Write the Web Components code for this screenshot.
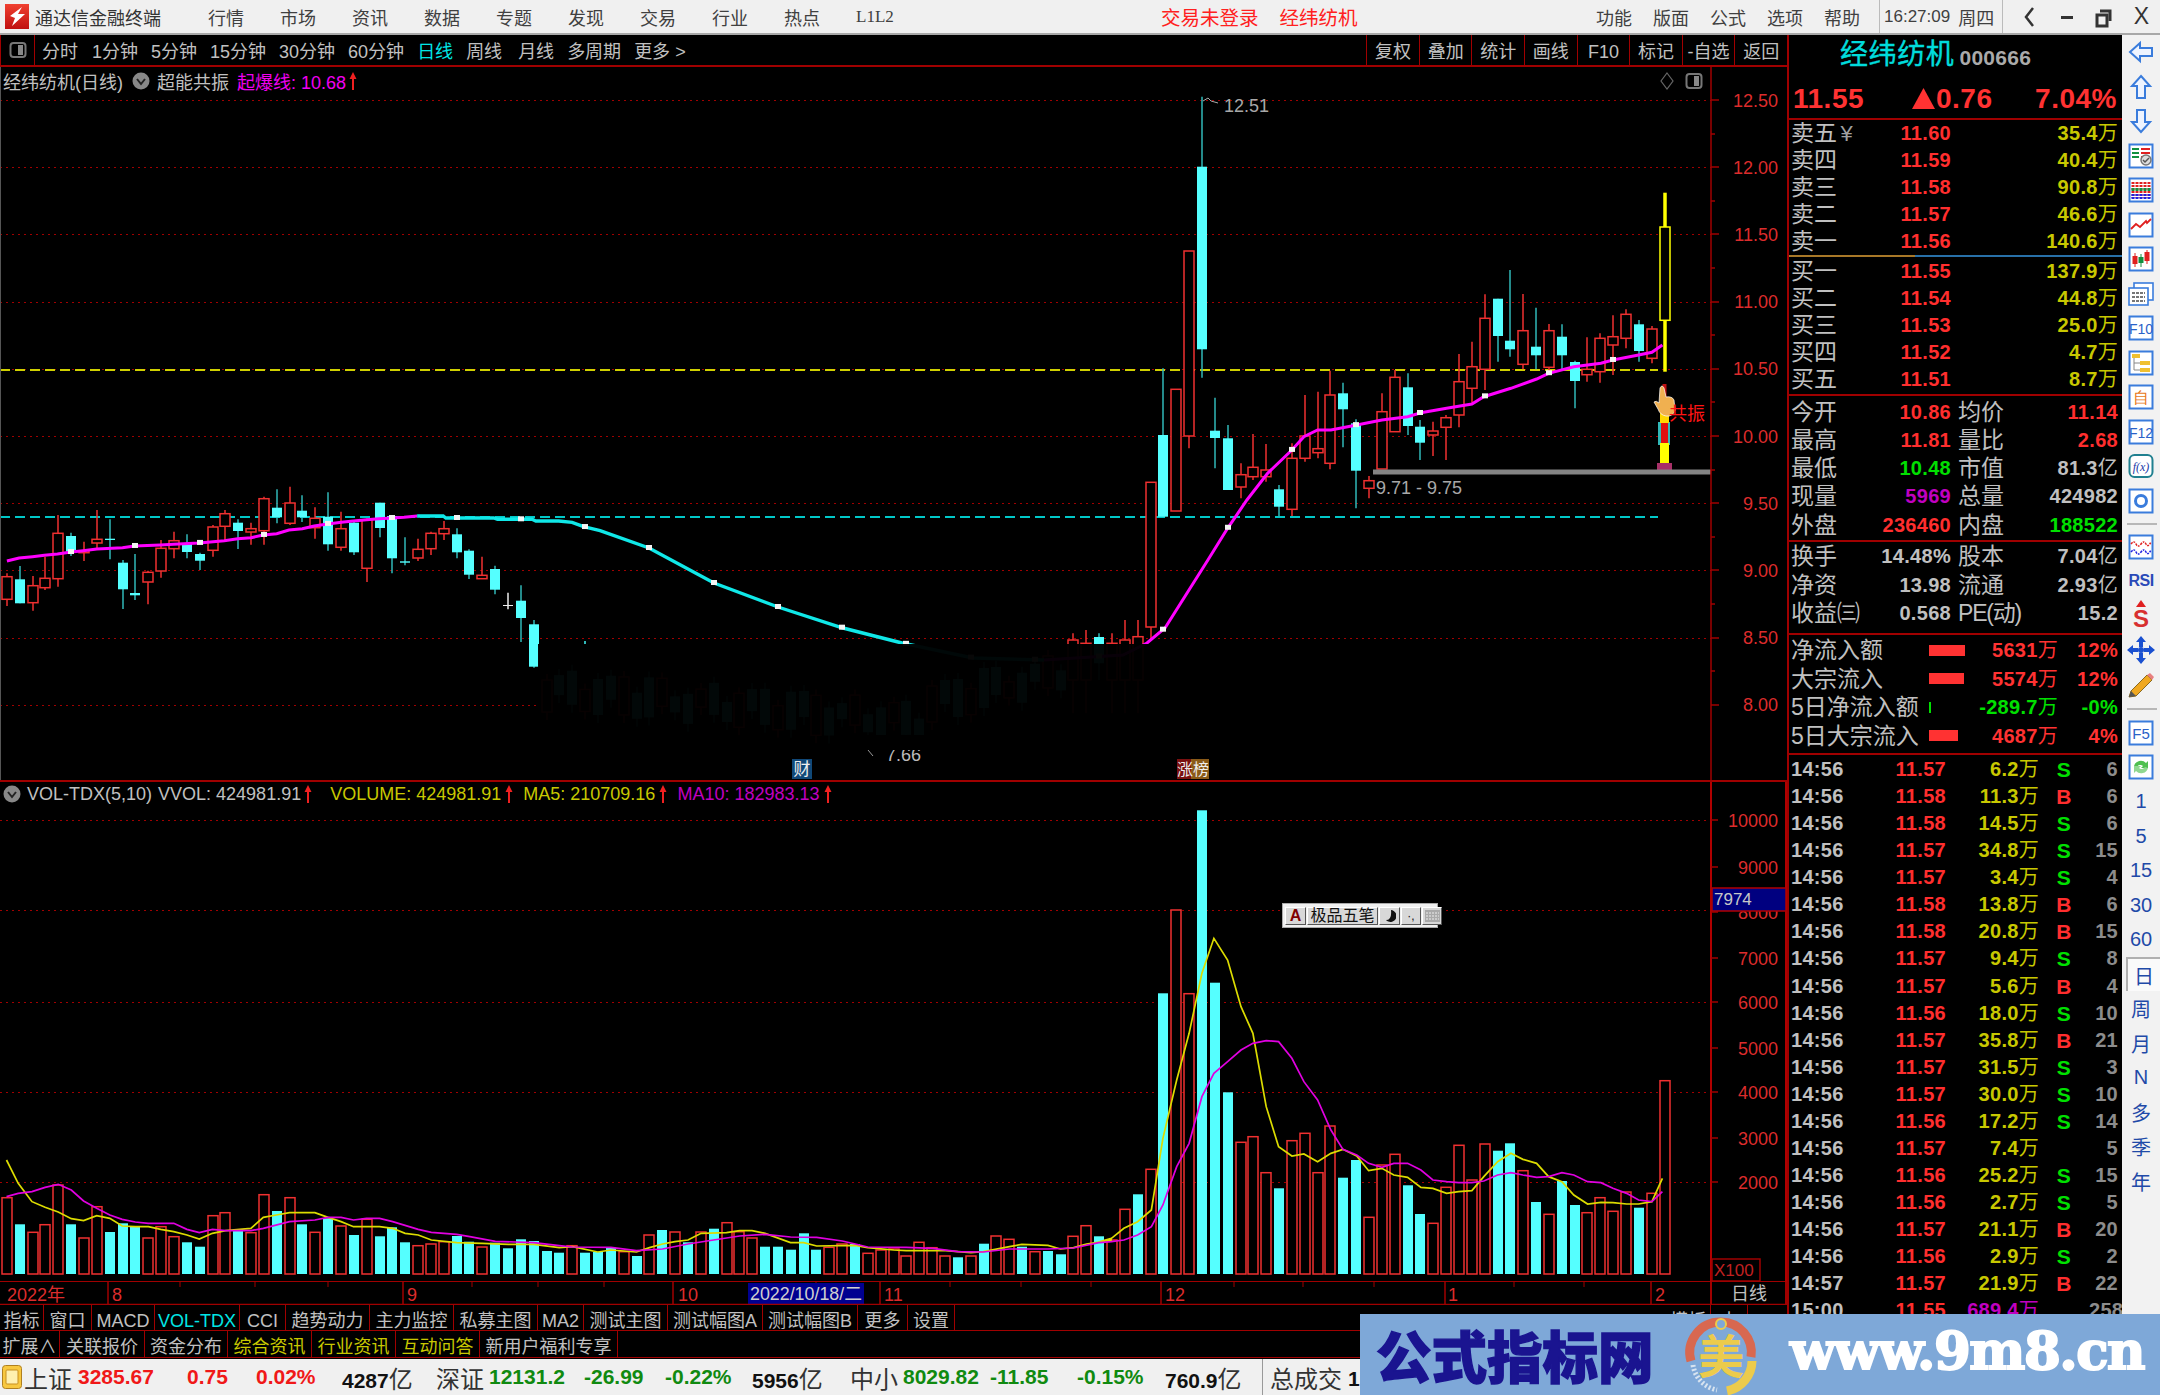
<!DOCTYPE html>
<html lang="zh"><head><meta charset="utf-8"><title>通达信金融终端</title>
<style>
html,body{margin:0;padding:0;background:#000;overflow:hidden}
body{font-family:"Liberation Sans","Noto Sans CJK SC",sans-serif;width:2160px;height:1395px}
</style></head>
<body>
<tdx-app>
  <tdx-titlebar slot="title"></tdx-titlebar>
  <tdx-toolbar slot="toolbar"></tdx-toolbar>
  <tdx-kline slot="kline"></tdx-kline>
  <tdx-volume slot="volume"></tdx-volume>
  <tdx-dateaxis slot="date"></tdx-dateaxis>
  <tdx-tabbar slot="tabs1" style="height:26px">
    <tdx-tab w="44">指标</tdx-tab><tdx-tab w="48">窗口</tdx-tab><tdx-tab w="63">MACD</tdx-tab><tdx-tab w="85" c="#00e6e6">VOL-TDX</tdx-tab><tdx-tab w="46">CCI</tdx-tab><tdx-tab w="84">趋势动力</tdx-tab><tdx-tab w="84">主力监控</tdx-tab><tdx-tab w="84">私募主图</tdx-tab><tdx-tab w="46">MA2</tdx-tab><tdx-tab w="84">测试主图</tdx-tab><tdx-tab w="95">测试幅图A</tdx-tab><tdx-tab w="95">测试幅图B</tdx-tab><tdx-tab w="50">更多</tdx-tab><tdx-tab w="47">设置</tdx-tab>
    <tdx-tab w="45" style="margin-left:711px">模板</tdx-tab><tdx-tab w="37">十</tdx-tab>
  </tdx-tabbar>
  <tdx-tabbar slot="tabs2" style="height:27px">
    <tdx-tab w="60">扩展∧</tdx-tab><tdx-tab w="85">关联报价</tdx-tab><tdx-tab w="83">资金分布</tdx-tab><tdx-tab w="84" c="#c8c800">综合资讯</tdx-tab><tdx-tab w="84" c="#c8c800">行业资讯</tdx-tab><tdx-tab w="84" c="#c8c800">互动问答</tdx-tab><tdx-tab w="138">新用户福利专享</tdx-tab>
  </tdx-tabbar>
  <tdx-quote slot="quote"></tdx-quote>
  <tdx-sidebar slot="side"></tdx-sidebar>
  <tdx-statusbar slot="status"></tdx-statusbar>
  <tdx-watermark slot="mark"></tdx-watermark>
</tdx-app>
<script>
const def=(name,css,html)=>customElements.define(name,class extends HTMLElement{
  connectedCallback(){ if(this.shadowRoot) return;
    const r=this.attachShadow({mode:'open'});
    r.innerHTML=`<style>${css}</style>${typeof html==='function'?html(this):html}`; }
});
const RED='#f03030',CY='#55ffff',TEAL='#30b8b8',YEL='#c8c800',GRN='#00e000',MAG='#c000c0',GRY='#c0c0c0',LINE='#a00000';

/* ---------- app frame ---------- */
def('tdx-app',`
:host{display:grid;position:relative;width:2160px;height:1395px;grid-template-rows:35px 1324px 36px;grid-template-columns:1787px 335px 38px;background:#000;overflow:hidden}
.t{grid-column:1/4}.l{display:flex;flex-direction:column;background:#000}.s{grid-column:1/4}
.m{position:absolute;right:0;bottom:0}`,
`<div class="t"><slot name="title"></slot></div>
 <div class="l"><slot name="toolbar"></slot><slot name="kline"></slot><slot name="volume"></slot><slot name="date"></slot><slot name="tabs1"></slot><slot name="tabs2"></slot></div>
 <slot name="quote"></slot><slot name="side"></slot>
 <div class="s"><slot name="status"></slot></div>
 <div class="m"><slot name="mark"></slot></div>`);

/* ---------- title bar ---------- */
def('tdx-titlebar',`
:host{display:flex;align-items:center;height:33px;background:#f0f0f0;border-bottom:2px solid #a8a8a8;font-size:18px;color:#404040;padding-left:5px}
svg{flex:none}.app{margin-left:6px;width:173px;color:#333}.menu{display:flex;gap:36px;align-items:center}.menu span{flex:none}
.warn{position:absolute;left:1161px;color:#ff2020;font-size:19.5px;display:flex;gap:21px}
.r{position:absolute;left:1596px;display:flex;gap:21px}
.clock{position:absolute;left:1879px;height:33px;width:124px;display:flex;align-items:center;border-left:1px solid #bbb;border-right:1px solid #bbb;padding-left:4px;box-sizing:border-box;font-size:17px;gap:8px}
.clock b{font-weight:400;font-size:18px}
.w{position:absolute;left:2012px;display:flex;align-items:center;gap:0}
.w>*{width:37px;display:flex;justify-content:center;align-items:center;height:33px}
.w b{font-size:23px;font-weight:400;color:#333}`,
`<svg width="24" height="25" viewBox="0 0 24 25"><defs><linearGradient id="g" x1="0" y1="0" x2="0" y2="1"><stop offset="0" stop-color="#f04030"/><stop offset="1" stop-color="#c01010"/></linearGradient></defs><rect width="24" height="25" fill="url(#g)"/><path d="M17 3 L5 12 L10 14 L7 22 L20 10 L13 10 Z" fill="#fff"/></svg>
<span class="app">通达信金融终端</span>
<div class="menu"><span>行情</span><span>市场</span><span>资讯</span><span>数据</span><span>专题</span><span>发现</span><span>交易</span><span>行业</span><span>热点</span><span style="font-size:17px;font-family:'Liberation Serif';line-height:18px">L1L2</span></div>
<div class="warn"><span>交易未登录</span><span>经纬纺机</span></div>
<div class="r"><span>功能</span><span>版面</span><span>公式</span><span>选项</span><span>帮助</span></div>
<div class="clock"><span>16:27:09</span><b>周四</b></div>
<div class="w"><svg width="37" height="33" viewBox="0 0 37 33"><path d="M21 8 L14 17 L21 26" fill="none" stroke="#333" stroke-width="2.5"/></svg>
<svg width="37" height="33" viewBox="0 0 37 33"><rect x="12" y="16" width="12" height="3" fill="#333"/></svg>
<svg width="37" height="33" viewBox="0 0 37 33"><path d="M14 11h10v10" fill="none" stroke="#333" stroke-width="3"/><rect x="11" y="15" width="10" height="11" fill="none" stroke="#333" stroke-width="3"/></svg>
<b>X</b></div>`);

/* ---------- toolbar ---------- */
def('tdx-toolbar',`
:host{display:flex;height:30px;flex:none;background:#000;border-bottom:2px solid ${LINE};color:${GRY};font-size:18px;line-height:35px;white-space:nowrap}
.ic{width:35px;border-left:1px solid ${LINE};border-right:1px solid ${LINE};box-sizing:border-box;display:flex;align-items:center;justify-content:center}
.a{display:flex;gap:13px;margin-left:7px}.a span{flex:none}.sel{color:#00e6e6}
.b{display:flex;margin-left:auto}.b span{width:52.6px;text-align:center;border-left:1px solid ${LINE};box-sizing:border-box}`,
`<div class="ic"><svg width="18" height="18" viewBox="0 0 18 18"><rect x="1.5" y="2" width="15" height="14" rx="3" fill="none" stroke="#777" stroke-width="2"/><rect x="9" y="4" width="5" height="10" fill="#888"/></svg></div>
<div class="a"><span style="margin-right:1px">分时</span><span>1分钟</span><span>5分钟</span><span>15分钟</span><span>30分钟</span><span>60分钟</span><span class="sel">日线</span><span>周线</span><span style="margin-left:3px">月线</span><span>多周期</span><span>更多 &gt;</span></div>
<div class="b"><span>复权</span><span>叠加</span><span>统计</span><span>画线</span><span>F10</span><span>标记</span><span>-自选</span><span>返回</span></div>`);

/* ---------- chart data: price candles ---------- */
const L=[['r',400,410,478,498],['c',378,418,490,490],['r',408,437,488,512],['r',350,415,443,450],['r',225,280,416,440],['c',278,288,335,348],['r',305,332,338,363],['r',210,298,309,330],['c',238,296,300,358],['c',360,368,448,507],['c',342,459,466,480],['r',392,397,426,493],['r',300,325,393,413],['r',275,302,326,355],['c',283,310,336,355],['c',338,342,362,390],['r',255,261,331,350],['r',210,221,259,300],['c',238,248,273,327],['r',248,266,276,314],['r',170,176,272,314],['c',148,203,232,250],['r',140,189,250,255],['c',166,212,232,246],['r',202,235,263,296],['c',157,230,313,332],['r',215,266,322,332],['c',240,248,337,345],['r',235,240,385,426],['c',188,188,264,292],['c',225,228,355,400],['c',292,364,368,376],['r',296,328,354,363],['r',275,280,326,345],['r',243,266,281,300],['c',265,283,337,355],['c',328,332,404,417],['r',350,406,416,416],['c',377,387,449,463],['w',458,495,498,508],['c',436,482,534,606],['c',540,553,680,683]];
const R=[['r',1660,1680,1800,1900],['r',1650,1690,1800,1900],['c',1660,1671,1750,1800],['r',1660,1690,1800,1900],['r',1620,1680,1800,1900],['r',1620,1670,1800,1900],
['r',1207,1207,1641,1680],['c',865,1065,1310,1310],['r',928,928,1293,1293],['r',513,513,1068,1105],['c',50,260,808,893],['c',953,1052,1074,1165],['c',1035,1075,1230,1230],['r',1150,1184,1221,1255],['r',1062,1162,1190,1200],['r',1092,1170,1190,1205],['c',1215,1228,1280,1310],['r',1090,1135,1288,1308],['r',945,1068,1135,1145],['r',935,1106,1118,1135],['r',872,945,1150,1168],['c',908,940,988,1102],['c',1018,1030,1172,1285],['r',1188,1202,1225,1255],['r',940,995,1167,1167],['r',870,892,1055,1055],['c',880,922,1038,1065],['c',1020,1040,1088,1140],['r',1025,1053,1065,1128],['r',1005,1013,1042,1140],['r',822,905,1005,1042],['r',785,860,925,968],['r',643,715,868,930],['c',656,656,768,845],['c',570,782,808,830],['r',642,752,853,868],['c',683,800,826,868],['r',732,752,862,880],['c',733,770,826,870],['c',842,846,903,985],['r',772,868,884,905],['r',760,775,875,908],['r',706,770,795,885],['r',688,703,775,805],['c',720,733,813,845],['r',738,747,835,850],['y',338,441,721,875]];
const X=i=>Math.round(6.9+12.85*i);
function candle(i,c,hi,t,b,lo){
  const x=X(i),col={r:RED,c:CY,w:'#eee',y:'#ffff00'}[c],wick=c==='c'?TEAL:col,ww=c==='y'?3.5:1.5;
  let s=`<path d="M${x} ${hi}V${lo}" stroke="${wick}" stroke-width="${ww}"/>`;
  const h=Math.max(b-t,1);
  if(c==='c'||c==='w') s+=`<rect x="${x-5}" y="${t}" width="10" height="${h}" fill="${col}"/>`;
  else s+=`<rect x="${x-5}" y="${t}" width="10" height="${h}" fill="#000" stroke="${col}" stroke-width="1.5"/>`;
  return s;
}
const zL=v=>+(440+v/3).toFixed(1), zR=v=>+(80+v/3).toFixed(1);
const ptsL=[[18,363],[50,354],[85,350],[116,346],[150,342],[186,336],[217,332],[253,327],[320,323],[351,318],[420,315],[453,313],[520,309],[586,302],[621,296],[656,293],[688,285],[723,281],[755,270],[790,266],[821,258],[856,252],[892,247],[923,243],[958,239],[990,236],[1025,234],[1056,232],[1090,228]].map(p=>[p[0]/2.613,zL(p[1])]);
const ptsC=[[1090,228],[1158,228],[1165,234],[1290,234],[1300,238],[1390,238],[1400,243],[1460,243],[1495,247],[1525,260],[1568,272]].map(p=>[p[0]/2.613,zL(p[1])]).concat([[649,548],[714,583],[778,607],[843,628],[902,643],[973,658],[1044,660]]);
const ptsM2=[[1044,660],[1123,655],[1147,643],[1165,628]].concat([[235,1440],[278,1345],[320,1260],[365,1180],[418,1110],[444,1070],[474,1050],[503,1050],[559,1035],[614,1020],[670,1010],[699,998],[755,985],[810,972],[836,950],[895,925],[951,897],[977,880],[1032,860],[1091,850],[1117,840],[1173,825],[1202,817],[1225,795]].map(p=>[1100+p[0]/2.178,zR(p[1])]));
const poly=p=>p.map(q=>q[0].toFixed(1)+','+q[1]).join(' ');
function at(x){const a=ptsL.concat(ptsC.slice(1),ptsM2.slice(1));for(let k=1;k<a.length;k++){if(x<=a[k][0])return a[k-1][1]+(a[k][1]-a[k-1][1])*(x-a[k-1][0])/(a[k][0]-a[k-1][0]);}return a[a.length-1][1]}

function klineSvg(){
  const Y=p=>100+(12.5-p)*134.4; let s='';
  const lv=['12.50','12.00','11.50','11.00','10.50','10.00','9.50','9.00','8.50','8.00'];
  lv.forEach(v=>{const y=Math.round(Y(+v));const e=v==='8.00'?538:1711;s+=`<path d="M0 ${y}.5H${e}" stroke="${LINE}" stroke-dasharray="2 4"/>`;});
  s+=`<path d="M0 370H1658" stroke="#d0d000" stroke-width="2" stroke-dasharray="10 5"/><path d="M0 517H1658" stroke="#00c8c8" stroke-width="2" stroke-dasharray="10 5"/>`;
  L.forEach((c,i)=>s+=candle(i,c[0],zL(c[1]),zL(c[2]),zL(c[3]),zL(c[4])));
  for(let i=42;i<83;i++){const m=690+Math.sin(i*1.7)*8+(i<72?(i-42)*1.1:(83-i)*3-20),h=8+(i*7%13),hi=Math.max(646,m-h-6);s+=candle(i,i%3?'c':'r',hi,Math.max(648,m-h),m+h,m+h+8);}
  s+=`<rect x="584" y="641" width="2" height="3" fill="${TEAL}"/>`;
  R.forEach((c,k)=>s+=candle(k+83,c[0],zR(c[1]),zR(c[2]),zR(c[3]),zR(c[4])));
  s+=`<polyline points="${poly(ptsL)}" fill="none" stroke="#ff00ff" stroke-width="3"/><polyline points="${poly(ptsC)}" fill="none" stroke="#10e8e8" stroke-width="3.4"/><polyline points="${poly(ptsM2)}" fill="none" stroke="#ff00ff" stroke-width="3"/>`;
  for(let i=5;i<130;i+=5){const x=X(i),y=at(x);s+=`<rect x="${x-3}" y="${y-3}" width="6" height="5" fill="#f4f4f4"/>`;}
  s+=`<rect x="538" y="644" width="1173" height="106" fill="#000" opacity=".97"/>`;
  /* signal stack */
  s+=`<path d="M1664.5 384V410" stroke="#c01010" stroke-width="4"/><rect x="1658" y="422" width="12" height="23" fill="${TEAL}"/><rect x="1660" y="410" width="9" height="13" fill="#ffd800"/><rect x="1661" y="423" width="7" height="20" fill="#e01010"/><rect x="1660" y="443" width="9" height="20" fill="#ffff00"/><rect x="1657" y="463" width="15" height="10" fill="#a83068"/>`;
  s+=`<path d="M1373 472H1711" stroke="#848484" stroke-width="5"/>`;
  s+=`<path d="M1660 388q2-4 4 0l2 9q6-1 8 3l1 10q-2 7-9 6q-6-1-8-7l-4-7q2-2 5 1z" fill="#f0b050" stroke="#fff" stroke-width=".7"/>`;
  s+=`<text x="1669" y="420" fill="#ff1414" font-size="18">共振</text>`;
  s+=`<text x="1376" y="494" fill="#a8a8a8" font-size="18">9.71 - 9.75</text>`;
  s+=`<path d="M1203 101l5-3 3 3 7 2" fill="none" stroke="#aaa" stroke-width="1"/><text x="1224" y="112" fill="#a8a8a8" font-size="18">12.51</text>`;
  s+=`<text x="886" y="761" fill="#bbb" font-size="18">7.66</text><path d="M868 750l5 6" stroke="#999"/><rect x="860" y="735" width="70" height="15" fill="#000"/>`;
  /* markers */
  s+=`<rect x="792" y="759" width="20" height="20" fill="#104878"/><text x="802" y="775" fill="#eee" font-size="17" text-anchor="middle">财</text>`;
  s+=`<rect x="1177" y="759" width="14" height="20" fill="#7a1010"/><rect x="1191" y="759" width="18" height="20" fill="#8a5a18"/><text x="1193" y="775" fill="#eee" font-size="16" text-anchor="middle" textLength="32" lengthAdjust="spacingAndGlyphs">涨榜</text>`;
  /* axis */
  s+=`<rect x="1711" y="67" width="76" height="713" fill="#000"/><path d="M1711 67V780" stroke="${LINE}" stroke-width="1.5"/>`;
  for(let p=12.5;p>=8;p-=.25){const y=Math.round(Y(p)),big=Math.abs(p*2-Math.round(p*2))<.01;s+=`<path d="M1711 ${y}h${big?8:4}" stroke="${LINE}" stroke-width="1.5"/>`;}
  lv.forEach(v=>{s+=`<text x="1778" y="${Y(+v)+6.5}" fill="#dc2c2c" font-size="18" text-anchor="end">${v}</text>`;});
  return s;
}
const arrow=`<svg width="8" height="20" viewBox="0 0 8 20" style="flex:none"><path d="M4 1L7.5 8H5V19H3V8H.5z" fill="#f02020"/></svg>`;
const tog=`<svg width="18" height="18" viewBox="0 0 18 18" style="flex:none"><circle cx="9" cy="9" r="8.5" fill="#888"/><path d="M5 7l4 5 4-5" fill="none" stroke="#222" stroke-width="2"/></svg>`;

def('tdx-kline',`
:host{display:block;position:relative;height:713px;flex:none;background:#000;font-size:18px;color:${GRY};white-space:nowrap}
svg.c{display:block;position:absolute;left:0;top:0}
.h{position:absolute;left:3px;top:0;height:28px;display:flex;align-items:center}
.ti{position:absolute;left:1660px;top:5px;display:flex;gap:11px;align-items:center}
:host::before{content:"";position:absolute;left:0;top:0;bottom:0;width:1px;background:#555;z-index:1}`,
()=>`<svg class="c" width="1787" height="713" viewBox="0 67 1787 713">${klineSvg()}</svg>
<div class="h"><span>经纬纺机(日线)</span><span style="margin:0 7px 0 9px;display:flex">${tog}</span><span>超能共振</span><span style="color:#f000f0;margin-left:8px">起爆线: 10.68</span><span style="margin-left:3px;display:flex">${arrow}</span></div>
<div class="ti"><svg width="14" height="18" viewBox="0 0 14 18"><path d="M7 1L13 9 7 17 1 9z" fill="none" stroke="#666" stroke-width="1.2"/></svg><svg width="18" height="18" viewBox="0 0 18 18"><rect x="1.5" y="2" width="15" height="14" rx="3" fill="none" stroke="#777" stroke-width="2"/><rect x="9" y="4" width="5" height="10" fill="#888"/></svg></div>`);

/* ---------- volume ---------- */
const VA=[['r',293],['c',373],['r',397],['r',374],['r',255],['c',373],['r',414],['r',320],['c',396],['c',370],['c',378],['r',414],['r',380],['r',410],['c',427],['c',440],['r',347],['r',338],['c',392],['r',398],['r',284],['c',333],['r',293],['c',373],['r',397],['c',355],['r',378],['c',405],['r',358],['c',409],['c',382],['c',427],['r',437],['r',432],['r',425],['c',408],['c',425],['r',441],['c',428],['c',445],['c',418],['c',423],['c',453],['c',458],['r',437],['c',458],['c',456],['c',443],['r',455],['c',468],['r',405],['c',390],['r',396],['c',427],['r',396],['c',386],['r',368],['r',395],['r',414],['c',440],['c',440],['c',449],['c',400],['c',449],['r',442],['r',432],['c',432],['r',460],['r',450],['r',447],['r',468],['r',427],['r',443],['r',468],['c',472],['r',468],['c',431],['r',408],['r',418],['c',440],['r',455],['c',453],['c',463],['r',409],['r',377],['c',409],['r',420],['r',328],['c',283]].map(q=>[q[0],1100+q[1]/3]);
const VB=[['r',1168],['c',640],['r',390],['r',641],['c',91],['c',608],['c',937],['r',1087],['r',1070],['r',1178],['c',1225],['r',1082],['r',1060],['r',1178],['r',1038],['c',1193],['c',1140],['r',1312],['r',1155],['r',1123],['c',1216],['c',1302],['r',1330],['r',1222],['r',1096],['r',1200],['r',1092],['c',1112],['c',1090],['r',1172],['c',1266],['r',1303],['c',1203],['c',1275],['r',1298],['r',1253],['r',1294],['r',1236],['c',1283],['r',1240],['r',902]].map(q=>[q[0],780+q[1]/3]);
const YA=[[9,180],[25,250],[44,305],[62,322],[80,336],[98,356],[115,362],[133,347],[151,355],[168,378],[186,380],[204,380],[221,388],[239,395],[257,405],[274,417],[292,400],[310,392],[345,385],[362,352],[380,345],[398,338],[433,338],[451,352],[469,365],[486,380],[522,380],[540,385],[557,400],[575,405],[593,420],[628,428],[663,430],[699,433],[734,433],[769,443],[787,440],[822,456],[840,450],[875,456],[893,443],[911,432],[928,425],[946,420],[964,400],[999,398],[1017,392],[1034,392],[1052,400],[1087,428],[1105,428],[1123,438],[1176,436],[1193,443],[1229,450],[1246,452],[1300,452],[1335,458],[1352,455],[1388,440],[1405,433],[1441,436],[1458,447],[1476,443],[1494,432],[1529,420]].map(p=>[p[0]/1.375,1100+p[1]/3]);
const MA=[[9,290],[25,280],[44,275],[62,262],[80,253],[98,270],[115,303],[133,325],[151,345],[168,358],[186,366],[204,370],[239,370],[257,388],[274,398],[292,388],[310,392],[345,392],[362,385],[398,365],[433,360],[451,352],[469,352],[486,360],[504,355],[522,355],[540,365],[575,388],[593,397],[628,403],[646,410],[681,424],[734,428],[769,437],[787,441],[840,442],[875,452],[911,447],[946,432],[981,420],[1017,408],[1052,403],[1087,411],[1123,412],[1158,423],[1176,432],[1193,441],[1246,442],[1282,445],[1317,455],[1352,456],[1388,447],[1441,447],[1476,444],[1511,428]].map(p=>[p[0]/1.375,1100+p[1]/3]);
const YB=[[0,1385],[25,1375],[52,1345],[82,1325],[112,1290],[137,1075],[167,900],[194,760],[222,580],[248,475],[278,540],[307,680],[333,760],[362,980],[389,1100],[418,1128],[444,1122],[474,1145],[503,1120],[529,1108],[559,1128],[585,1172],[614,1165],[640,1185],[670,1192],[699,1222],[725,1225],[755,1240],[781,1235],[810,1232],[836,1190],[866,1145],[895,1120],[921,1138],[951,1150],[977,1190],[1006,1205],[1032,1245],[1062,1272],[1091,1267],[1117,1268],[1147,1272],[1173,1272],[1202,1265],[1225,1195]].map(p=>[1100+p[0]/2.178,780+p[1]/3]);
const MB=[[0,1388],[25,1385],[52,1380],[82,1365],[112,1340],[137,1275],[167,1160],[194,1090],[222,950],[248,880],[278,845],[307,810],[333,790],[362,782],[389,785],[418,835],[444,905],[474,960],[503,1050],[529,1108],[559,1125],[585,1150],[614,1162],[640,1150],[670,1150],[699,1170],[725,1200],[755,1205],[781,1208],[810,1208],[836,1203],[866,1185],[895,1178],[921,1185],[951,1192],[977,1190],[1006,1178],[1032,1185],[1062,1205],[1091,1208],[1117,1225],[1147,1240],[1173,1260],[1202,1265],[1225,1235]].map(p=>[1100+p[0]/2.178,780+p[1]/3]);
function volSvg(){
  let s='';
  [820,910,1002,1092,1182].forEach(y=>s+=`<path d="M0 ${y}.5H1711" stroke="${LINE}" stroke-dasharray="2 4"/>`);
  VA.concat(VB).forEach((v,i)=>{const x=X(i),t=+v[1].toFixed(1),h=+(1274-t).toFixed(1);
    s+=v[0]==='c'?`<rect x="${x-5}" y="${t}" width="10" height="${h}" fill="${CY}"/>`:`<rect x="${x-5}" y="${t}" width="10" height="${h}" fill="#000" stroke="${RED}" stroke-width="1.5"/>`;});
  s+=`<polyline points="${poly(YA.concat(YB))}" fill="none" stroke="#dcdc00" stroke-width="1.7"/><polyline points="${poly(MA.concat(MB))}" fill="none" stroke="#e000e0" stroke-width="1.7"/>`;
  s+=`<path d="M0 1282H1787" stroke="${LINE}" stroke-width="2"/>`;
  s+=`<path d="M1711 782V1282" stroke="#b00000" stroke-width="2"/><path d="M1786 782V1282" stroke="#b00000" stroke-width="2"/>`;
  [[10000,820],[9000,867],[8000,912],[7000,958],[6000,1002],[5000,1048],[4000,1092],[3000,1138],[2000,1182]].forEach(q=>{
    s+=`<path d="M1711 ${q[1]}h7" stroke="${LINE}" stroke-width="1.5"/><text x="1778" y="${q[1]+7}" fill="#dc2c2c" font-size="18" text-anchor="end">${q[0]}</text>`;});
  s+=`<rect x="1712" y="888" width="74" height="23" fill="#000080" stroke="#b00000" stroke-width="1.5"/><text x="1714" y="905" fill="#c8c8c8" font-size="17">7974</text>`;
  s+=`<rect x="1712" y="1259" width="48" height="22" fill="none" stroke="${LINE}" stroke-width="1.5"/><text x="1714" y="1276" fill="#c02020" font-size="17">X100</text>`;
  return s;
}
def('tdx-volume',`
:host{display:block;position:relative;height:502px;flex:none;background:#000;font-size:18px;color:${GRY};border-top:2px solid ${LINE};box-sizing:border-box;white-space:nowrap}
svg.c{display:block;position:absolute;left:0;top:0}
.h{position:absolute;left:3px;top:0;height:24px;display:flex;align-items:center}
.ime{position:absolute;left:1282px;top:121px}`,
()=>`<svg class="c" width="1787" height="500" viewBox="0 782 1787 500">${volSvg()}</svg>
<div class="h">${tog}<span style="margin-left:6px">VOL-TDX(5,10)</span><span style="margin-left:6px">VVOL: 424981.91</span><span style="margin-left:3px;display:flex">${arrow}</span><span style="color:${YEL};margin-left:18px">VOLUME: 424981.91</span><span style="margin-left:4px;display:flex">${arrow}</span><span style="color:${YEL};margin-left:10px">MA5: 210709.16</span><span style="margin-left:4px;display:flex">${arrow}</span><span style="color:${MAG};margin-left:10px">MA10: 182983.13</span><span style="margin-left:4px;display:flex">${arrow}</span></div>
<div class="ime"><tdx-ime></tdx-ime></div>`);
def('tdx-ime',`
:host{display:flex;width:156px;height:25px;box-sizing:border-box;background:#f0f0f0;border:1px solid #aaa;padding:3px 2px 2px;gap:1px;color:#111;font-size:16px;align-items:stretch}
span{display:flex;align-items:center;justify-content:center;background:#d8d8d8;border:1px solid;border-color:#fff #555 #555 #fff;flex:none;line-height:1}`,
`<span style="width:19px;color:#800000;font-weight:700">A</span><span style="width:69px">极品五笔</span><span style="width:19px"><svg width="12" height="14" viewBox="0 0 12 14"><path d="M7 1a6 6 0 1 1-5 10q6 0 5-10" fill="#111"/></svg></span><span style="width:18px;font-size:12px">·,</span><span style="width:18px"><svg width="15" height="12" viewBox="0 0 15 12"><rect width="15" height="12" fill="#aaa"/><path d="M1 3h13M1 6h13M1 9h13" stroke="#eee" stroke-dasharray="2 1"/></svg></span>`);

/* ---------- date axis ---------- */
def('tdx-dateaxis',`:host{display:block;height:23px;flex:none;background:#000}svg{display:block}`,
()=>{let s='';
  [108,403,673,880,1161,1445,1651].forEach(x=>s+=`<path d="M${x} 1282V1305" stroke="${LINE}" stroke-width="1.5"/>`);
  [180,255,328,472,538,604,816,950,1021,1091,1234,1303,1374,1514,1584].forEach(x=>s+=`<path d="M${x} 1282v5" stroke="${LINE}"/>`);
  s+=`<rect x="748" y="1283" width="116" height="21" fill="#000090"/><text x="750" y="1300" fill="#d0d0d0" font-size="18" textLength="112" lengthAdjust="spacingAndGlyphs">2022/10/18/二</text>`;
  [['2022年',7],['8',112],['9',407],['10',678],['11',884],['12',1165],['1',1448],['2',1655]].forEach(q=>s+=`<text x="${q[1]}" y="1301" fill="#dc2c2c" font-size="18">${q[0]}</text>`);
  s+=`<path d="M1711 1282V1305M1786 1282V1305" stroke="${LINE}" stroke-width="2"/><text x="1749" y="1300" fill="${GRY}" font-size="18" text-anchor="middle">日线</text>`;
  s+=`<path d="M0 1304.5H1787" stroke="${LINE}" stroke-width="1.5"/>`;
  return `<svg width="1787" height="23" viewBox="0 1282 1787 23">${s}</svg>`;});

/* ---------- tabs ---------- */
def('tdx-tabbar',`:host{display:flex;flex:none;background:#000;border-bottom:1.5px solid ${LINE};box-sizing:border-box}`,`<slot></slot>`);
def('tdx-tab',`:host{display:block;box-sizing:border-box;border-right:1.5px solid ${LINE};text-align:center;font-size:18px;line-height:32px;white-space:nowrap;flex:none;overflow:hidden}`,
  t=>{t.style.width=t.getAttribute('w')+'px';t.style.color=t.getAttribute('c')||'#c0c0c0';return `<slot></slot>`;});

/* ---------- quote panel ---------- */
const w=(v,u='万')=>`${v}<i>${u}</i>`;
const ask=[['卖五 <small>¥</small>','11.60','35.4'],['卖四','11.59','40.4'],['卖三','11.58','90.8'],['卖二','11.57','46.6'],['卖一','11.56','140.6']];
const bid=[['买一','11.55','137.9'],['买二','11.54','44.8'],['买三','11.53','25.0'],['买四','11.52','4.7'],['买五','11.51','8.7']];
const ob=a=>a.map(r=>`<div class="rw ob"><u>${r[0]}</u><b class="re">${r[1]}</b><b class="ye">${w(r[2])}</b></div>`).join('');
const st=(a,av,ac,b,bv,bc,h)=>`<div class="rw st" style="height:${h}px;line-height:${h}px"><u>${a}</u><b style="color:${ac}">${av}</b><u class="l2">${b}</u><b style="color:${bc}">${bv}</b></div>`;
const fl=(a,bw,bc,v,p,c)=>`<div class="rw fl"><u>${a}</u><span class="bar" style="width:${bw}px;background:${bc}"></span><b style="color:${c}">${w(v)}</b><b style="color:${c}">${p}</b></div>`;
const TK=[['14:56','11.57','6.2','S','6'],['14:56','11.58','11.3','B','6'],['14:56','11.58','14.5','S','6'],['14:56','11.57','34.8','S','15'],['14:56','11.57','3.4','S','4'],['14:56','11.58','13.8','B','6'],['14:56','11.58','20.8','B','15'],['14:56','11.57','9.4','S','8'],['14:56','11.57','5.6','B','4'],['14:56','11.56','18.0','S','10'],['14:56','11.57','35.8','B','21'],['14:56','11.57','31.5','S','3'],['14:56','11.57','30.0','S','10'],['14:56','11.56','17.2','S','14'],['14:56','11.57','7.4','','5'],['14:56','11.56','25.2','S','15'],['14:56','11.56','2.7','S','5'],['14:56','11.57','21.1','B','20'],['14:56','11.56','2.9','S','2'],['14:57','11.57','21.9','B','22'],['15:00','11.55','689.4','','258']];
def('tdx-quote',`
:host{display:block;background:#000;border-left:2px solid ${LINE};box-sizing:border-box;color:${GRY};font-size:23px;overflow:hidden;white-space:nowrap;height:1324px}
i{font-style:normal;font-weight:400}u{text-decoration:none;font-weight:400}
small{font-size:22px;margin-left:-3px;color:#a0a0a0;font-weight:400}
b{font-weight:700;font-size:20px;letter-spacing:.3px}
.hd{height:40px;display:flex;align-items:center;padding-left:51px}
.nm{font-size:28px;color:#00dcdc;font-weight:400;letter-spacing:.6px;line-height:1;-webkit-text-stroke:.4px #00dcdc}
.cd{font-size:21px;font-weight:700;color:#aaa;margin-left:5px;margin-top:6px;letter-spacing:.3px}
.pr{height:43px;border-bottom:2px solid ${LINE};position:relative;color:#ff3232;font-weight:700;font-size:28px;line-height:47px;letter-spacing:.5px}
.pr span{position:absolute;top:0}
.rw{display:grid;align-items:center;padding:0 4px 0 2px}
.ob{grid-template-columns:80px 80px 1fr;height:27px;line-height:27px}
.ob b:nth-child(2){text-align:right}.ob b:nth-child(3){text-align:right}
.re{color:#ff2e2e}.ye{color:${YEL}}
.sep{height:2px;background:linear-gradient(90deg,#a87828 0 126px,#2870a8 126px)}
.sec{border-bottom:2px solid ${LINE}}
.st{grid-template-columns:80px 80px 67px 1fr}.st b{text-align:right}.st .l2{margin-left:7px}
.fl{grid-template-columns:138px 50px 79px 1fr;height:28.5px;line-height:28px;position:relative}.fl b{text-align:right}
.bar{height:11px;display:block}
.tk{display:grid;grid-template-columns:80px 75px 93px 50px 29px;height:27.07px;line-height:27px;padding-left:2px}
.tk b{text-align:right}.tk b:first-child{text-align:left;color:${GRY}}.tk b:nth-child(4){text-align:center;font-size:21px}.tk b:nth-child(5){color:#8c8c8c}`,
()=>`<div class="hd"><span class="nm">经纬纺机</span><span class="cd">000666</span></div>
<div class="pr"><span style="left:4px">11.55</span><span style="left:123px;display:flex;align-items:center;height:47px"><svg width="23" height="21" viewBox="0 0 23 21"><path d="M11.5 0L23 21H0z" fill="#ff3232"/></svg><span style="position:static;margin-left:1px">0.76</span></span><span style="right:5px">7.04%</span></div>
${ob(ask)}<div class="sep"></div><div style="height:1px"></div>${ob(bid)}
<div class="sec" style="height:1px"></div>
<div class="sec" style="padding-top:1.5px;height:142.5px;box-sizing:content-box">
${[['今开','10.86','#ff2e2e','均价','11.14','#ff2e2e'],['最高','11.81','#ff2e2e','量比','2.68','#ff2e2e'],['最低','10.48',GRN,'市值',w('81.3','亿'),GRY],['现量','5969',MAG,'总量','424982',GRY],['外盘','236460','#ff2e2e','内盘','188522',GRN]].map(a=>st(...a,28.3)).join('')}
</div>
<div class="sec" style="height:91px">
${[['换手','14.48%',GRY,'股本',w('7.04','亿'),GRY],['净资','13.98',GRY,'流通',w('2.93','亿'),GRY],['收益㈢','0.568',GRY,'<span style="letter-spacing:-1.2px">PE(动)</span>','15.2',GRY]].map(a=>st(...a,28.7)).join('')}
</div>
<div class="sec" style="height:120px;padding-top:1px;box-sizing:border-box">
${fl('净流入额',36,'#ff3232','5631','12%','#ff3232')}${fl('大宗流入',35,'#ff3232','5574','12%','#ff3232')}${fl('5日净流入额',1.5,GRN,'-289.7','-0%',GRN)}${fl('5日大宗流入',29,'#ff3232','4687','4%','#ff3232')}
</div>
<div style="height:1px"></div>
${TK.map((r,i)=>`<div class="tk"><b>${r[0]}</b><b class="re">${r[1]}</b><b style="color:${i==20?MAG:YEL}">${w(r[2])}</b><b style="color:${r[3]=='S'?GRN:'#ff2e2e'}">${r[3]}</b><b>${r[4]}</b></div>`).join('')}`);

/* ---------- side bar ---------- */
const BL='#3a7cdc';
const frame=(inner,f='#fff')=>`<svg width="26" height="26" viewBox="0 0 26 26"><rect x="1.5" y="1.5" width="23" height="23" fill="${f}" stroke="${BL}" stroke-width="2"/>${inner}</svg>`;
const ftext=(t,c=BL,sz=15)=>frame(`<text x="13" y="19" text-anchor="middle" font-size="${sz}" fill="${c}" font-family="Liberation Sans">${t}</text>`);
const arrowI=r=>`<svg width="26" height="26" viewBox="0 0 26 26"><path transform="rotate(${r} 13 13)" d="M2 13L12 4V9H24V17H12V22Z" fill="#eef4ff" stroke="${BL}" stroke-width="2"/></svg>`;
const ICONS=[arrowI(0),arrowI(90),arrowI(-90),
 frame(`<path d="M4 6h7M4 10h7M4 14h7" stroke="#109040" stroke-width="1.8"/><path d="M13 6h9M13 10h9M13 14h5" stroke="#e02020" stroke-width="1.8"/><circle cx="18" cy="17" r="5" fill="#ddd" stroke="#777" stroke-width="1.5"/><path d="M15 17l2 2 4-4" stroke="#555" stroke-width="1.5" fill="none"/>`),
 frame(`<path d="M5 5v16M9 5v16M13 5v16M17 5v16M21 5v16" stroke-width="3" stroke-dasharray="2 1" stroke="#e02020"/><path d="M5 11v3M9 11v3M13 11v3M17 11v3M21 11v3" stroke-width="3" stroke="#109040"/><path d="M5 17v5M9 17v5M13 17v5M17 17v5M21 17v5" stroke-width="3" stroke-dasharray="2 1" stroke="#2020e0"/>`),
 frame(`<path d="M3 17L8 12l4 3 6-6 1 2 4-4" fill="none" stroke="#e02020" stroke-width="1.8"/>`),
 frame(`<path d="M7 7v14" stroke="#e02020"/><rect x="4.5" y="10" width="5" height="8" fill="#e02020"/><path d="M13 8v13" stroke="#109040"/><rect x="10.5" y="11" width="5" height="6" fill="#109040"/><path d="M19 4v14" stroke="#e02020"/><rect x="16.5" y="6" width="5" height="9" fill="#e02020"/>`),
 `<svg width="26" height="26" viewBox="0 0 26 26"><rect x="6" y="2" width="19" height="17" fill="#fff" stroke="${BL}" stroke-width="1.6"/><rect x="1" y="7" width="19" height="17" fill="#fff" stroke="${BL}" stroke-width="1.6"/><path d="M4 12h13M4 16h13M4 20h13" stroke="#777" stroke-width="2" stroke-dasharray="3 1"/></svg>`,
 ftext('F10','#2a62c8',14),
 frame(`<path d="M6 7V20H12M6 13H12" fill="none" stroke="#888"/><rect x="4" y="4" width="8" height="4" fill="#f0c030"/><rect x="12" y="11" width="10" height="4" fill="#f0c030"/><rect x="12" y="18" width="10" height="4" fill="#f0c030"/>`),
 ftext('自','#e87820',16),ftext('F12','#2a62c8',14),
 `<svg width="26" height="26" viewBox="0 0 26 26"><rect x="1.5" y="2" width="23" height="22" rx="5" fill="#fff" stroke="#208090" stroke-width="2"/><text x="13" y="18" text-anchor="middle" font-size="12" fill="#1a3aa8" font-family="Liberation Serif" font-style="italic">f(x)</text></svg>`,
 frame(`<circle cx="13" cy="13" r="5.5" fill="none" stroke="${BL}" stroke-width="3"/>`)];
const ICONS2=[
 frame(`<path d="M3 10q3-4 5 0t5 0 5 0 5-2" fill="none" stroke="#e02020" stroke-width="1.5" stroke-dasharray="2 1"/><path d="M3 18q3-4 5 0t5 0 5 0 5-2" fill="none" stroke="#2020e0" stroke-width="1.5" stroke-dasharray="2 1"/>`),
 `<span style="font:700 16px 'Liberation Sans';color:#2a4ab8;letter-spacing:-.5px">RSI</span>`,
 `<svg width="26" height="32" viewBox="0 0 26 32"><path d="M13 0l5 7h-10z" fill="#e02020"/><text x="13" y="27" text-anchor="middle" font-size="24" font-weight="700" fill="#d83030" font-family="Liberation Sans">S</text></svg>`,
 `<svg width="28" height="28" viewBox="0 0 28 28" fill="#1a50d0"><path d="M14 0l5 6h-3v5h-4V6H9zM14 28l-5-6h3v-5h4v5h3zM0 14l6-5v3h5v4H6v3zM28 14l-6 5v-3h-5v-4h5V9z"/><circle cx="14" cy="14" r="3"/></svg>`,
 `<svg width="28" height="28" viewBox="0 0 28 28"><path d="M4 20L20 4l5 5L9 25l-7 1z" fill="#f0a820" stroke="#8a6a20"/><path d="M20 4l5 5 2-3-4-4z" fill="#e88080"/><path d="M2 26l2-6 5 5z" fill="#555"/></svg>`];
const ICONS3=[ftext('F5','#2a62c8',15),
 frame(`<path d="M6 12a7 7 0 0 1 12-3l2-2v7h-7l2-2a4 4 0 0 0-6 1z" fill="#50c050"/><path d="M20 14a7 7 0 0 1-12 3l-2 2v-7h7l-2 2a4 4 0 0 0 6-1z" fill="#90d890"/>`)];
const TXT=['1','5','15','30','60','日','周','月','N','多','季','年'];
def('tdx-sidebar',`
:host{display:block;background:#f2f2f2;height:1324px;overflow:hidden;color:#1f4aa8;font-size:20px}
.it{height:34.5px;display:flex;align-items:center;justify-content:center}
.sp{height:2px;margin:4.7px 3px 4.7px 5px;background:#b8b8b8}
.sp2{margin:5.7px 3px 5.7px 5px}
.on{background:#fafafa;border-top:2px solid #b0b0b0;border-left:2px solid #b0b0b0;box-sizing:border-box;margin-left:4px}`,
()=>`${ICONS.map(i=>`<div class="it">${i}</div>`).join('')}<div class="sp"></div>${ICONS2.map(i=>`<div class="it">${i}</div>`).join('')}<div class="sp sp2"></div>${ICONS3.map(i=>`<div class="it">${i}</div>`).join('')}${TXT.map(t=>`<div class="it${t=='日'?' on':''}">${t}</div>`).join('')}`);

/* ---------- status bar ---------- */
const SB=[['上证',54,'c'],['3285.67',109,'r'],['0.75',69,'r'],['0.02%',86,'r'],[w('4287','亿'),94,'k'],['深证',53,'c'],['12131.2',95,'g'],['-26.99',81,'g'],['-0.22%',87,'g'],[w('5956','亿'),98,'k'],['中小',53,'c'],['8029.82',87,'g'],['-11.85',87,'g'],['-0.15%',88,'g'],[w('760.9','亿'),97,'k']];
def('tdx-statusbar',`
:host{display:flex;align-items:center;height:36px;background:#f0f0f0;font-size:21px;font-weight:700;white-space:nowrap;overflow:hidden;color:#111}
span{flex:none;display:block}
i{font-style:normal;font-weight:400;font-size:24px;color:#333}
.c{font-weight:400;font-size:24px;color:#333}.r{color:#f01818}.g{color:#108a10}.k{color:#111}
.ic{width:24px;display:flex;padding-left:2px;box-sizing:border-box}`,
()=>`<span class="ic"><svg width="20" height="24" viewBox="0 0 20 24"><rect x=".5" y=".5" width="19" height="23" rx="3" fill="#f8c840" stroke="#b08020"/><rect x="4" y="5" width="12" height="14" rx="1" fill="#fff0b0" stroke="#c89020"/></svg></span>
${SB.map(s=>`<span class="${s[2]}" style="width:${s[1]}px">${s[0]}</span>`).join('')}
<span style="border-left:1px solid #999;height:36px;margin-left:0;padding-left:7px;display:flex;align-items:center"><span class="c" style="width:78px">总成交</span><span class="k">1024亿</span></span>`);

/* ---------- watermark ---------- */
def('tdx-watermark',`
:host{display:flex;align-items:center;width:800px;height:81px;background:#7ea8d8;position:relative;overflow:hidden}
.a{font:900 55.5px/1 "Noto Sans CJK SC",sans-serif;color:#1a1490;margin-left:16px;width:278px;flex:none;-webkit-text-stroke:1.4px #1a1490;white-space:nowrap}
svg{flex:none;margin-left:27px}
.u{font:700 53px/1 "DejaVu Serif",serif;color:#fff;margin-left:29px;margin-top:-8px;letter-spacing:-1.5px;-webkit-text-stroke:2px #fff;white-space:nowrap}`,
`<span class="a">公式指标网</span>
<svg width="80" height="80" viewBox="0 0 80 80"><path d="M10 46A30.500 30.500 0 0 1 40 7 30.500 30.500 0 0 1 70 42" fill="none" stroke="#d86850" stroke-width="9"/><path d="M71 46A31 31 0 0 1 46 76" fill="none" stroke="#eccb4c" stroke-width="9"/><path d="M12 50A30 30 0 0 0 36 75" fill="none" stroke="#d8e4f0" stroke-width="5" stroke-dasharray="2 2"/><circle cx="40" cy="9" r="5" fill="#7ea8d8" stroke="#eccb4c" stroke-width="2"/><text x="40" y="58" text-anchor="middle" font-size="46" font-weight="700" fill="#eccb4c" font-family="Noto Sans CJK SC">美</text></svg>
<span class="u">www.9m8.cn</span>`);
</script>
</body></html>
